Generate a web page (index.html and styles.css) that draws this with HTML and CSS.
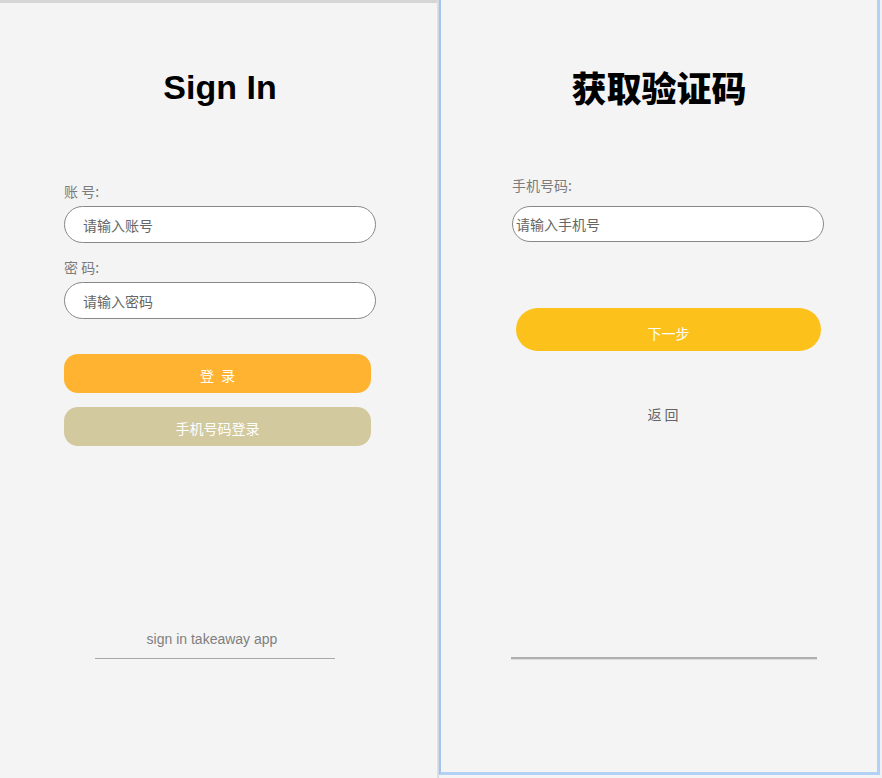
FILE: index.html
```html
<!DOCTYPE html>
<html lang="zh-CN">
<head>
<meta charset="utf-8">
<title>Sign In</title>
<link rel="stylesheet" href="styles.css">
</head>
<body>
<div class="screen">
  <section class="panel panel-login">
    <h1 class="title">Sign In</h1>
    <label class="label label-first">账 号:</label>
    <div class="field"><span class="placeholder">请输入账号</span></div>
    <label class="label label-second">密 码:</label>
    <div class="field"><span class="placeholder">请输入密码</span></div>
    <button class="btn btn-login">登 录</button>
    <button class="btn btn-phone">手机号码登录</button>
    <div class="spacer"></div>
    <p class="footer-text">sign in takeaway app</p>
    <div class="footer-line"></div>
  </section>
  <div class="divider"></div>
  <section class="panel panel-code">
    <h1 class="title title-cn">获取验证码</h1>
    <label class="label label-phone">手机号码:</label>
    <div class="field field-tight"><span class="placeholder">请输入手机号</span></div>
    <button class="btn btn-next">下一步</button>
    <p class="back">返 回</p>
    <div class="spacer"></div>
    <div class="footer-line footer-line-wide"></div>
  </section>
  <div class="edge"></div>
</div>
</body>
</html>
```

FILE: styles.css
```css
* {
  box-sizing: border-box;
}

html, body {
  margin: 0;
  padding: 0;
}

body {
  background: #f4f4f4;
  font-family: "Liberation Sans", "Noto Sans CJK SC", sans-serif;
  width: 882px;
  height: 778px;
  overflow: hidden;
}

.screen {
  display: flex;
  align-items: flex-start;
  height: 778px;
}

.panel {
  display: flex;
  flex-direction: column;
  background: #f4f4f4;
}

.panel-login {
  width: 437px;
  height: 778px;
  padding-left: 64px;
  padding-right: 61px;
  border-top: 3px solid #d6d6d6;
  padding-top: 0;
}

.divider {
  width: 2px;
  height: 778px;
  background: linear-gradient(to right, #e4e6ea, #c9d3e0);
}

.panel-code {
  width: 441px;
  height: 775px;
  border-left: 2px solid #a6c3ea;
  border-right: 3px solid #b3d0f5;
  border-bottom: 3px solid #b3d0f5;
  padding-left: 71px;
  padding-right: 53px;
}

.edge {
  width: 2px;
  height: 778px;
  background: #eef0f3;
}

.title {
  margin: 64px 0 0 0;
  height: 40px;
  line-height: 40px;
  font-size: 34px;
  font-weight: bold;
  color: #000;
  text-align: center;
  font-family: "Liberation Sans", "Noto Sans CJK SC", sans-serif;
}

.title-cn {
  font-family: "Noto Sans CJK SC", sans-serif;
  font-weight: 900;
  font-size: 35px;
  margin-top: 67px;
  margin-right: 18px;
}

.label {
  display: block;
  font-size: 14px;
  line-height: 18px;
  height: 18px;
  color: #7c7c7c;
  font-family: "Noto Sans CJK SC", sans-serif;
}

.label-first {
  margin-top: 75px;
}

.label-second {
  margin-top: 15px;
}

.label-phone {
  margin-top: 69px;
}

.field {
  margin-top: 6px;
  height: 37px;
  width: 312px;
  background: #fff;
  border: 1px solid #888;
  border-radius: 19px;
  display: flex;
  align-items: center;
  padding-left: 18px;
}

.field-tight {
  margin-top: 12px;
  height: 36px;
  padding-left: 3px;
}

.placeholder {
  font-size: 14px;
  color: #666;
  font-family: "Noto Sans CJK SC", sans-serif;
}

.btn {
  display: block;
  border: none;
  color: #fff;
  font-size: 14px;
  font-family: "Noto Sans CJK SC", sans-serif;
  width: 307px;
  height: 39px;
  border-radius: 14px;
  padding: 2px 0 0 0;
  margin: 0;
}

.btn-login {
  margin-top: 35px;
  background: #ffb331;
  letter-spacing: 2px;
  text-indent: 2px;
}

.btn-phone {
  margin-top: 14px;
  background: #d3c99f;
}

.btn-next {
  margin-top: 66px;
  margin-left: 4px;
  width: 305px;
  height: 43px;
  border-radius: 22px;
  background: #fcc21b;
  padding-top: 6px;
}

.back {
  margin: 54px 0 0 0;
  padding-right: 10px;
  text-align: center;
  font-size: 14px;
  line-height: 18px;
  color: #666;
  font-family: "Noto Sans CJK SC", sans-serif;
}

.spacer {
  flex: 1;
}

.footer-text {
  margin: 0 16px 0 0;
  text-align: center;
  font-size: 14px;
  line-height: 18px;
  color: #7f7f7f;
}

.footer-line {
  margin-top: 10px;
  margin-left: 31px;
  width: 240px;
  height: 1px;
  background: #a8a8a8;
  margin-bottom: 119px;
}

.footer-line-wide {
  margin-left: -1px;
  width: 306px;
  height: 2px;
  background: #b0b0b0;
  box-shadow: 0 1px 1px #dcdcdc;
  margin-bottom: 113px;
}
```
